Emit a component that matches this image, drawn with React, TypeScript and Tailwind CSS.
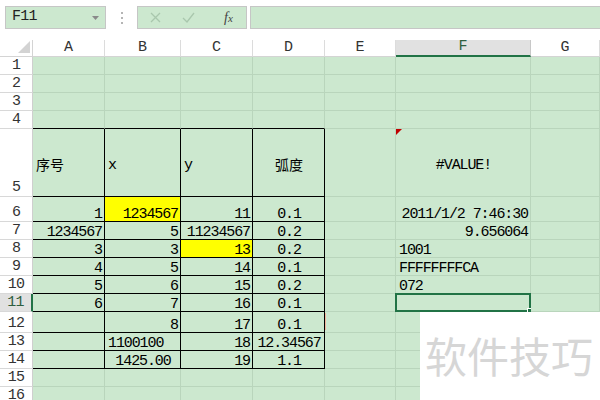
import React from "react"

type Cell = { t: string; a?: "l" | "r" | "c"; y?: boolean; cjk?: boolean }

interface Row {
    n: number
    h: string
    mid?: boolean
    cells: Record<number, Cell>
}

const COLS = ["w-[72px]", "w-[76px]", "w-[72px]", "w-[72px]", "w-[71px]", "w-[135px]", "w-[69px]"]
const LETTERS = ["A", "B", "C", "D", "E", "F", "G"]

const ROWS: Row[] = [
    { n: 1, h: "h-[18px]", cells: {} },
    { n: 2, h: "h-[18px]", cells: {} },
    { n: 3, h: "h-[18px]", cells: {} },
    { n: 4, h: "h-[18px]", cells: {} },
    {
        n: 5,
        h: "h-[68px]",
        mid: true,
        cells: {
            0: { t: "序号", a: "l", cjk: true },
            1: { t: "x", a: "l" },
            2: { t: "y", a: "l" },
            3: { t: "弧度", a: "c", cjk: true },
            5: { t: "#VALUE!", a: "c" },
        },
    },
    {
        n: 6,
        h: "h-[25px]",
        cells: {
            0: { t: "1" },
            1: { t: "1234567", y: true },
            2: { t: "11" },
            3: { t: "0.1", a: "c" },
            5: { t: "2011/1/2 7:46:30" },
        },
    },
    {
        n: 7,
        h: "h-[18px]",
        cells: {
            0: { t: "1234567" },
            1: { t: "5" },
            2: { t: "11234567" },
            3: { t: "0.2", a: "c" },
            5: { t: "9.656064" },
        },
    },
    {
        n: 8,
        h: "h-[18px]",
        cells: {
            0: { t: "3" },
            1: { t: "3" },
            2: { t: "13", y: true },
            3: { t: "0.2", a: "c" },
            5: { t: "1001", a: "l" },
        },
    },
    {
        n: 9,
        h: "h-[18px]",
        cells: {
            0: { t: "4" },
            1: { t: "5" },
            2: { t: "14" },
            3: { t: "0.1", a: "c" },
            5: { t: "FFFFFFFFCA", a: "l" },
        },
    },
    {
        n: 10,
        h: "h-[18px]",
        cells: {
            0: { t: "5" },
            1: { t: "6" },
            2: { t: "15" },
            3: { t: "0.2", a: "c" },
            5: { t: "072", a: "l" },
        },
    },
    {
        n: 11,
        h: "h-[18px]",
        cells: { 0: { t: "6" }, 1: { t: "7" }, 2: { t: "16" }, 3: { t: "0.1", a: "c" } },
    },
    {
        n: 12,
        h: "h-[21px]",
        cells: { 1: { t: "8" }, 2: { t: "17" }, 3: { t: "0.1", a: "c" } },
    },
    {
        n: 13,
        h: "h-[18px]",
        cells: { 1: { t: "1100100", a: "l" }, 2: { t: "18" }, 3: { t: "12.34567", a: "c" } },
    },
    {
        n: 14,
        h: "h-[18px]",
        cells: { 1: { t: "1425.00", a: "c" }, 2: { t: "19" }, 3: { t: "1.1", a: "c" } },
    },
    { n: 15, h: "h-[18px]", cells: {} },
    { n: 16, h: "h-[18px]", cells: {} },
]

function Toolbar() {
    return (
        <div className="h-[40px] flex items-start pt-[6px] bg-white">
            {/* name box */}
            <div className="ml-[5px] w-[101px] h-[23px] shrink-0 border border-[#c6c6c6] bg-[#cce8cf] flex items-center justify-between pl-[6px] pr-[6px]">
                <span className="text-[15px] tracking-[-0.8px] text-[#222]">F11</span>
                <svg width="7" height="4" viewBox="0 0 7 4">
                    <polygon points="0,0 7,0 3.5,4" fill="#8a8a8a" />
                </svg>
            </div>
            <div className="w-[31px] h-[23px] shrink-0 flex flex-col items-center justify-center gap-[3px]">
                <div className="w-[2px] h-[2px] bg-[#b5b5b5]" />
                <div className="w-[2px] h-[2px] bg-[#b5b5b5]" />
                <div className="w-[2px] h-[2px] bg-[#b5b5b5]" />
            </div>
            {/* cancel / enter / fx */}
            <div className="w-[110px] h-[23px] shrink-0 border border-[#c6c6c6] bg-[#cce8cf] flex items-center">
                <svg className="ml-[12px]" width="11" height="11" viewBox="0 0 11 11">
                    <path d="M1 1 L10 10 M10 1 L1 10" stroke="#a9c7ad" strokeWidth="1.3" />
                </svg>
                <svg className="ml-[21px]" width="13" height="11" viewBox="0 0 13 11">
                    <path d="M1 6 L5 10 L12 1" stroke="#a9c7ad" strokeWidth="1.3" fill="none" />
                </svg>
                <span className="ml-[29px] font-['Liberation_Serif',serif] italic text-[14px] text-[#444] leading-none">
                    f<span className="text-[11px]">x</span>
                </span>
            </div>
            <div className="ml-[3px] flex-1 h-[23px] border border-[#c6c6c6] bg-[#cce8cf] -mr-[4px]" />
        </div>
    )
}

function HeaderRow() {
    return (
        <div className="flex h-[17px]">
            <div className="relative w-[33px] shrink-0 h-full border-r border-b border-[#d4d4d4] bg-white">
                <svg className="absolute left-0 top-0" width="33" height="17" viewBox="0 0 33 17">
                    <polygon points="30,1 30,13 18,13" fill="#d3d3d3" />
                </svg>
            </div>
            {LETTERS.map((l, i) => {
                const sel = l === "F"
                return (
                    <div
                        key={l}
                        className={`${COLS[i]} shrink-0 h-full flex items-end justify-center leading-[14px] text-[15px] ${
                            sel
                                ? "bg-[#e1e1e1] border-b-2 border-b-[#217346] text-[#2f5e3f] border-r border-r-[#c8c8c8]"
                                : "bg-white border-b border-b-[#d4d4d4] border-r border-r-[#dcdcdc] text-[#333]"
                        }`}
                    >
                        <span className="pb-[1px]">{l}</span>
                    </div>
                )
            })}
        </div>
    )
}

function SheetRow({ row }: { row: Row }) {
    const sel = row.n === 11
    return (
        <div className={`flex ${row.h}`}>
            <div
                className={`w-[33px] shrink-0 h-full flex items-end justify-center leading-[12px] text-[15px] tracking-[-0.8px] border-b border-b-[#d8d8d8] ${
                    sel
                        ? "bg-[#e1e1e1] border-r-2 border-r-[#217346] text-[#2f5e3f]"
                        : "bg-white border-r border-r-[#cfcfcf] text-[#333]"
                }`}
            >
                <span className="pb-[2px]">{row.n}</span>
            </div>
            {LETTERS.map((_, c) => {
                const cell = row.cells[c]
                const inTable = row.n >= 5 && row.n <= 14 && c <= 3
                const blackB = row.n >= 4 && row.n <= 14 && c <= 3
                const a = cell?.a ?? "r"
                const justify = a === "l" ? "justify-start" : a === "c" ? "justify-center" : "justify-end"
                return (
                    <div
                        key={c}
                        className={`relative ${COLS[c]} shrink-0 h-full flex ${
                            row.mid ? "items-center leading-[18px] pt-[6px]" : "items-end leading-[12px]"
                        } ${justify} pl-[3px] pr-[2px] border-b border-r whitespace-nowrap text-black ${
                            blackB ? "border-b-black" : "border-b-[#b9d5bc]"
                        } ${inTable ? "border-r-black" : "border-r-[#b9d5bc]"} ${
                            cell?.y ? "bg-[#ffff00]" : "bg-[#cce8cf]"
                        }`}
                    >
                        {cell && (
                            <span
                                className={
                                    cell.cjk
                                        ? "text-[14px] tracking-[0px]"
                                        : "text-[15px] tracking-[-1.1px]"
                                }
                            >
                                {cell.t}
                            </span>
                        )}
                        {row.n === 5 && c === 5 && (
                            <svg className="absolute left-0 top-0" width="6" height="6" viewBox="0 0 6 6">
                                <polygon points="0,0 6,0 0,6" fill="#c00000" />
                            </svg>
                        )}
                        {row.n === 12 && c === 4 && (
                            <div className="absolute left-0 top-[1px] w-[1px] h-[17px] bg-[#f2b49c]" />
                        )}
                        {sel && c === 5 && (
                            <div className="absolute -left-[1px] -top-[1px] -right-[1px] -bottom-[1px] border-2 border-[#217346]">
                                <div className="absolute -right-[3px] -bottom-[3px] w-[5px] h-[5px] bg-[#217346] border border-white" />
                            </div>
                        )}
                    </div>
                )
            })}
        </div>
    )
}

export default function App() {
    return (
        <div className="relative w-[600px] h-[400px] overflow-hidden bg-white font-['Liberation_Mono','Noto_Sans_CJK_SC',monospace]">
            <Toolbar />
            <HeaderRow />
            {ROWS.map((r) => (
                <SheetRow key={r.n} row={r} />
            ))}
            {/* watermark */}
            <div className="absolute left-[420px] top-[312px] w-[180px] h-[88px] bg-white pl-[5px] pt-[22px]">
                <span className="font-['Noto_Sans_CJK_SC',sans-serif] text-[42px] leading-none text-[#d6d6d6] whitespace-nowrap">
                    软件技巧
                </span>
            </div>
        </div>
    )
}
